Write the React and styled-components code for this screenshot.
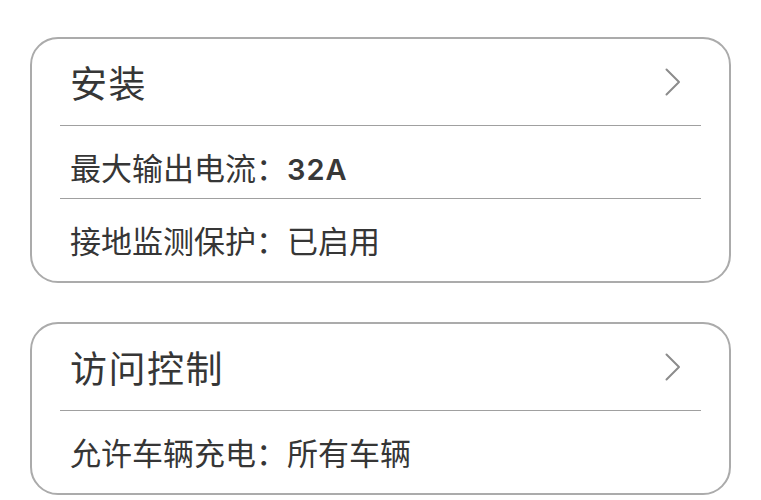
import React from "react";
import styled, { createGlobalStyle } from "styled-components";

const GlobalStyle = createGlobalStyle`
  html, body {
    margin: 0;
    padding: 0;
    background: #ffffff;
  }
  body {
    font-family: "Noto Sans CJK SC", "Noto Sans", sans-serif;
    color: #363636;
  }
`;

const Page = styled.div`
  display: flex;
  flex-direction: column;
  gap: 39px;
  padding: 37px 30px 0 30px;
`;

const Card = styled.section`
  border: 2px solid #ababab;
  border-radius: 28px;
  background: #ffffff;
`;

const Header = styled.div`
  height: 86px;
  display: flex;
  align-items: center;
  justify-content: space-between;
  padding: 0 47px 0 38px;
`;

const Title = styled.h2`
  margin: 0;
  font-family: "Noto Sans CJK SC", sans-serif;
  font-weight: 400;
  font-size: 37px;
  letter-spacing: 1.5px;
  color: #363636;
`;

const Divider = styled.div`
  height: 0;
  border-top: 1.5px solid #a0a0a0;
  margin: 0 28px;
`;

const Row = styled.div`
  height: 31px;
  padding: 25px 38px 16px;
  font-size: 31px;
  line-height: 31px;
  color: #363636;
  white-space: nowrap;

  &:last-child {
    padding-bottom: 26px;
  }
`;

const Strong = styled.span`
  font-family: "Inter", "Noto Sans", sans-serif;
  font-weight: 600;
  font-size: 29px;
  line-height: 1;
  letter-spacing: 1px;
  color: #383838;
`;

const Chevron = () => (
  <svg width="18" height="30" viewBox="0 0 18 30" fill="none">
    <path
      d="M2.5 2.5 L15 15 L2.5 27.5"
      stroke="#8c8c8c"
      strokeWidth="2"
      strokeLinecap="round"
      strokeLinejoin="round"
    />
  </svg>
);

const sections = [
  {
    title: "安装",
    rows: [
      { label: "最大输出电流：", value: "32A", strong: true },
      { label: "接地监测保护：", value: "已启用" },
    ],
  },
  {
    title: "访问控制",
    rows: [{ label: "允许车辆充电：", value: "所有车辆" }],
  },
];

export default function App() {
  return (
    <>
      <GlobalStyle />
      <Page>
        {sections.map((s) => (
          <Card key={s.title}>
            <Header>
              <Title>{s.title}</Title>
              <Chevron />
            </Header>
            {s.rows.map((r) => (
              <React.Fragment key={r.label}>
                <Divider />
                <Row>
                  {r.label}
                  {r.strong ? <Strong>{r.value}</Strong> : r.value}
                </Row>
              </React.Fragment>
            ))}
          </Card>
        ))}
      </Page>
    </>
  );
}
